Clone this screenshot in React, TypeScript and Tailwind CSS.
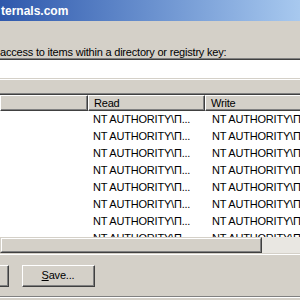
import React from "react";

const rows = Array.from({ length: 8 }, (_, i) => i);

const HeaderCell = ({ label, width }: { label: string; width: string }) => {
  return (
    <div
      className={`${width} flex h-full shrink-0 border-t border-l border-t-white border-l-white border-r border-r-[#404040] border-b border-b-[#404040]`}
    >
      <div className="flex h-full w-full items-center border-r border-b border-r-[#808080] border-b-[#808080] pl-[5px]">
        {label}
      </div>
    </div>
  );
};

const Button = ({ children }: { children: React.ReactNode }) => {
  return (
    <div className="h-[22px] w-[73px] shrink-0 border-t border-l border-t-white border-l-white border-r border-b border-r-[#404040] border-b-[#404040]">
      <div className="flex h-full w-full items-center justify-center border-r border-b border-r-[#808080] border-b-[#808080]">
        {children}
      </div>
    </div>
  );
};

export default function App() {
  return (
    <div className="h-[300px] w-[300px] overflow-hidden bg-[#d4d0c8] font-['Liberation_Sans',Arial,sans-serif] text-[11px] tracking-[-0.2px] text-black">
      {/* title bar, cropped on the left */}
      <div className="flex h-[21px] items-center bg-linear-to-r from-[#2f58ac] to-[#a8c9ef] pl-[1px] text-[12px] font-bold tracking-normal text-white">
        ternals.com
      </div>

      <div className="mt-[25px] h-[12px] whitespace-nowrap leading-[12px]">
        access to items within a directory or registry key:
      </div>

      {/* sunken edit box */}
      <div className="mt-0 w-[320px] border-t border-b border-t-[#808080] border-b-white">
        <div className="h-[20px] border-t border-b border-t-[#404040] border-b-[#d4d0c8] bg-white" />
      </div>

      {/* list view */}
      <div className="mt-[13px] w-[340px] border-t border-b border-t-[#808080] border-b-white">
        <div className="border-t border-b border-t-[#404040] border-b-[#d4d0c8]">
          <div className="flex h-[16px] leading-[14px]">
            <HeaderCell label="" width="w-[88px]" />
            <HeaderCell label="Read" width="w-[117px]" />
            <HeaderCell label="Write" width="w-[135px]" />
          </div>
          <div className="h-[126px] overflow-hidden bg-white">
            {rows.map((row) => (
              <div key={row} className="flex h-[17px] items-center whitespace-nowrap">
                <div className="w-[88px] shrink-0" />
                <div className="w-[117px] shrink-0 overflow-hidden pl-[5px]">
                  NT AUTHORITY\П...
                </div>
                <div className="w-[135px] shrink-0 overflow-hidden pl-[7px]">
                  NT AUTHORITY\Пользователи
                </div>
              </div>
            ))}
          </div>
          {/* horizontal scroll bar */}
          <div className="flex h-[16px] bg-[#e9e7e2]">
            <div className="h-full w-[262px] border-t border-l border-t-[#d4d0c8] border-l-[#d4d0c8] border-r border-b border-r-[#404040] border-b-[#404040]">
              <div className="h-full w-full border-t border-l border-t-white border-l-white border-r border-b border-r-[#808080] border-b-[#808080] bg-[#d4d0c8]" />
            </div>
          </div>
        </div>
      </div>

      <div className="mt-[10px] ml-[-64px] flex gap-[13px]">
        <Button>OK</Button>
        <Button>
          <span>
            <span className="underline">S</span>ave...
          </span>
        </Button>
      </div>

      <div className="mt-[9px] border-t border-t-[#808080]">
        <div className="border-t border-t-white" />
      </div>
    </div>
  );
}
